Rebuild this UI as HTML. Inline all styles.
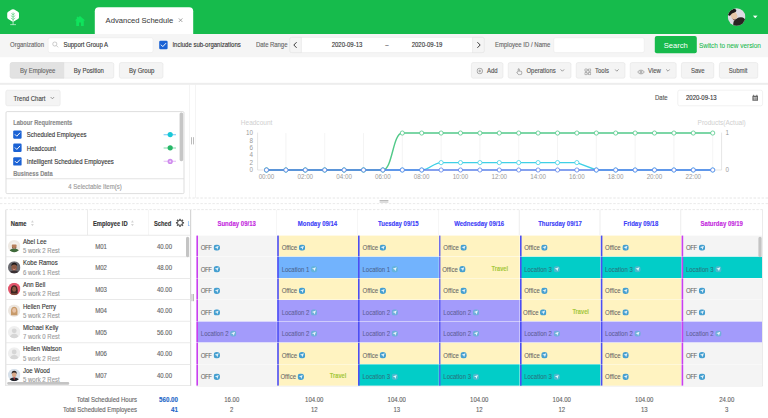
<!DOCTYPE html>
<html lang="en">
<head>
<meta charset="utf-8">
<title>Advanced Schedule</title>
<style>
*{box-sizing:border-box;margin:0;padding:0}
html,body{width:768px;height:418px;overflow:hidden;background:#fff}
body{font-family:"Liberation Sans",sans-serif;color:#333}
#app{position:absolute;left:0;top:0;width:1920px;height:1045px;transform:scale(.4);transform-origin:0 0;background:#fff;font-size:15px;overflow:hidden}
#app div,#app span,#app svg{position:absolute}
.t{white-space:nowrap;line-height:20px;height:20px;margin-top:-9px;transform:scaleY(1.07);-webkit-text-stroke:.28px currentColor}
.cell p,.cell b{-webkit-text-stroke:.15px currentColor}
.cell u,.cell em{display:inline-block;transform:scaleY(1.07);font-style:normal}
.cell b em{transform:scaleY(1.12)}
.b{font-weight:700}
.btn{background:#f4f4f4;border:1px solid #dcdcdc;border-radius:5px}
.inp{background:#fff;border:1px solid #e2e2e2;border-radius:5px}
.cb{width:21px;height:21px;background:#1b62d4;border-radius:3px}
.hdr{background:#16bb4c;left:0;top:0;width:1920px;height:85px}
.tab{background:#fff;left:237px;top:17.5px;width:246px;height:67.5px;border-radius:10px 10px 0 0}
.fbar{background:#f5f5f5;left:0;top:85px;width:1920px;height:58px}
.cell i{position:absolute;left:-0.3px;top:0;width:3.8px;height:100%;display:block}
.cell u{text-decoration:none;letter-spacing:-1px;margin-right:1px}
.cell p{position:absolute;left:10.5px;top:4.5px;height:100%;display:flex;align-items:center;white-space:nowrap}
.cell p.tv{left:7.5px}
#app .cell svg{position:static;margin-left:4px;flex:none}
.cell b{position:absolute;left:131px;top:3px;height:100%;display:flex;align-items:center;font-size:14.3px;color:#a6c83c}
.av{width:31px;height:31px;border-radius:50%;overflow:hidden}
</style>
</head>
<body>
<div id="app">
<div class="hdr"></div>
<svg style="left:17px;top:22px" width="32" height="42" viewBox="0 0 32 42">
<path d="M15.500 1 Q17 1 18.500 2 L28 7.500 Q30.500 9 30.500 12 V21 Q30.500 24 28 25.500 L18.500 31 Q15.500 32.500 12.500 31 L3.500 25.500 Q1 24 1 21 V12 Q1 9 3.500 7.500 L12.500 2 Q14 1 15.500 1Z" fill="#fff"/>
<path d="M15.700 30 V39.500 M8.500 39.800 H23" stroke="#e8f8ee" stroke-width="1.800" fill="none"/>
<path d="M15.700 9 V31 M15.700 15 l-4.500 -3.500 M15.700 15 l4.500 -3.500 M15.700 21 l-5.500 -4 M15.700 21 l5.500 -4 M15.700 27 l-5.500 -4 M15.700 27 l5.500 -4" stroke="#3cc96a" stroke-width="1.500" fill="none"/>
</svg>
<svg style="left:186px;top:39px" width="28" height="27" viewBox="0 0 28 27">
<path d="M14 1 L27 12 H23.5 V26 H16.5 V17.5 H11.5 V26 H4.5 V12 H1 L6 7.7 V3 H9.5 V4.8 Z" fill="#0fe35c"/></svg>
<div class="tab"></div>
<span class="t " style="top:51px;left:264px;transform:scaleY(1.055);font-size:19px;color:#3a3a3a;-webkit-text-stroke:.1px">Advanced Schedule</span>
<svg style="left:445px;top:44px" width="13" height="13" viewBox="0 0 13 13"><path d="M2 2l9 9M11 2l-9 9" stroke="#777" stroke-width="1.6" fill="none"/></svg>
<svg style="left:1819px;top:20px" width="45" height="45" viewBox="0 0 45 45">
<defs><clipPath id="avc"><circle cx="22.5" cy="22.5" r="22"/></clipPath></defs>
<g clip-path="url(#avc)"><rect width="45" height="45" fill="#dedbe4"/>
<path d="M14 45 Q13 30 22 27 Q30 22 38 24 Q45 27 45 36 V45 Z" fill="#2a2322"/>
<ellipse cx="16" cy="19" rx="8" ry="9.500" fill="#e6c6a8" transform="rotate(-25 16 19)"/>
<path d="M1 17 Q3 6 12 3 Q20 0 22 6 Q22 10 17 11 Q10 12 7 18 Q4 21 1 17Z" fill="#1c1818"/>
<path d="M9 24 Q14 30 20 27 L16 31 Z" fill="#8a5a48"/>
</g></svg>
<svg style="left:1881px;top:38px" width="14" height="8" viewBox="0 0 14 8"><path d="M1 0.5h12l-6 7z" fill="#fff"/></svg>
<div class="fbar"></div>
<span class="t " style="top:111.3px;left:25px;color:#666;">Organization</span>
<div class="inp" style="left:120px;top:94px;width:263px;height:38px;"></div>
<svg style="left:130px;top:103px" width="17" height="17" viewBox="0 0 17 17"><circle cx="7" cy="7" r="5.2" fill="none" stroke="#aaa" stroke-width="1.5"/><path d="M11 11l4.5 4.5" stroke="#aaa" stroke-width="1.6"/></svg>
<span class="t " style="top:111.3px;left:158.5px;color:#333">Support Group A</span>
<div class="cb" style="left:398px;top:102px;width:21px;height:21px;"><svg width="21" height="21" viewBox="0 0 21 21"><path d="M5 10.5l4 4 7.5-8" fill="none" stroke="#fff" stroke-width="2.4" stroke-linecap="round" stroke-linejoin="round"/></svg></div>
<span class="t " style="top:111.3px;left:431px;color:#333">Include sub-organizations</span>
<span class="t " style="top:111.3px;left:640px;color:#666;letter-spacing:-.15px">Date Range</span>
<div class="inp" style="left:724px;top:93px;width:487px;height:39px;"></div>
<div class="btn" style="left:724px;top:93px;width:30px;height:39px;border-radius:5px 0 0 5px;background:#f5f5f5"></div>
<div class="btn" style="left:1181px;top:93px;width:30px;height:39px;border-radius:0 5px 5px 0;background:#f5f5f5"></div>
<svg style="left:732px;top:104px" width="12" height="17" viewBox="0 0 12 17"><path d="M9.5 1.5l-7 7 7 7" fill="none" stroke="#333" stroke-width="2.4"/></svg>
<svg style="left:1191px;top:104px" width="12" height="17" viewBox="0 0 12 17"><path d="M2.5 1.5l7 7-7 7" fill="none" stroke="#333" stroke-width="2.4"/></svg>
<span class="t " style="top:111.3px;left:667.5px;width:400px;text-align:center;color:#333">2020-09-13</span>
<span class="t " style="top:111.3px;left:767.5px;width:400px;text-align:center;color:#333">–</span>
<span class="t " style="top:111.3px;left:867.5px;width:400px;text-align:center;color:#333">2020-09-19</span>
<span class="t " style="top:111.3px;left:1237.5px;color:#666;">Employee ID / Name</span>
<div class="inp" style="left:1384px;top:94px;width:227px;height:38px;"></div>
<div class="" style="left:1637px;top:90px;width:105px;height:43px;background:#17ba4c;border-radius:5px"></div>
<span class="t " style="top:112px;left:1489.5px;width:400px;text-align:center;transform:scaleY(1.055);color:#fff;font-size:19px;-webkit-text-stroke:0">Search</span>
<span class="t " style="top:112.5px;left:1747.5px;transform:scaleY(1.003);color:#17ba4c;font-size:16px;-webkit-text-stroke:.15px">Switch to new version</span>
<div class="btn" style="left:25px;top:156px;width:260px;height:39.5px;"></div>
<div class="" style="left:25px;top:156px;width:135px;height:39.5px;background:#e2e2e2;border-radius:5px 0 0 5px;border:1px solid #d8d8d8"></div>
<span class="t " style="top:176.7px;left:50px;color:#666">By Employee</span>
<span class="t " style="top:176.7px;left:184.5px;color:#444">By Position</span>
<div class="btn" style="left:298px;top:156px;width:110px;height:39.5px;"></div>
<span class="t " style="top:176.7px;left:322.5px;color:#444">By Group</span>
<div class="btn" style="left:1177.5px;top:156px;width:80.0px;height:39.5px;"></div>
<span class="t " style="top:176.7px;left:1217.5px;color:#555">Add</span>
<svg style="left:1191px;top:169px" width="17" height="17" viewBox="0 0 17 17"><circle cx="8.5" cy="8.5" r="7" fill="none" stroke="#666" stroke-width="1.3"/><path d="M8.5 5v7M5 8.5h7" stroke="#666" stroke-width="1.3"/></svg>
<div class="btn" style="left:1270px;top:156px;width:157.5px;height:39.5px;"></div>
<span class="t " style="top:176.7px;left:1316px;color:#555">Operations</span>
<svg style="left:1290px;top:170px" width="17" height="18" viewBox="0 0 17 18"><path d="M5.5 9V3.2a1.4 1.4 0 0 1 2.8 0V8h3.6a2.6 2.6 0 0 1 2.6 2.6V13a4 4 0 0 1-4 4H8.3a4 4 0 0 1-3.3-1.8L2.3 11.4a1.3 1.3 0 0 1 2-1.6z" fill="none" stroke="#666" stroke-width="1.3"/></svg>
<span style="left:1400px;top:172px;width:12px;height:8px"><svg width="12" height="8" viewBox="0 0 12 8"><path d="M1.5 1.5l4.5 4.5 4.5-4.5" fill="none" stroke="#777" stroke-width="1.8"/></svg></span>
<div class="btn" style="left:1440px;top:156px;width:122.5px;height:39.5px;"></div>
<span class="t " style="top:176.7px;left:1487.5px;color:#555">Tools</span>
<svg style="left:1461px;top:171px" width="17" height="17" viewBox="0 0 17 17"><g fill="none" stroke="#666" stroke-width="1.3"><rect x="1" y="1" width="6" height="6" rx="1"/><rect x="10" y="1" width="6" height="6" rx="1"/><rect x="1" y="10" width="6" height="6" rx="1"/><rect x="10" y="10" width="6" height="6" rx="1"/></g></svg>
<span style="left:1536px;top:172px;width:12px;height:8px"><svg width="12" height="8" viewBox="0 0 12 8"><path d="M1.5 1.5l4.5 4.5 4.5-4.5" fill="none" stroke="#777" stroke-width="1.8"/></svg></span>
<div class="btn" style="left:1575px;top:156px;width:116px;height:39.5px;"></div>
<span class="t " style="top:176.7px;left:1620px;color:#555">View</span>
<svg style="left:1593px;top:173px" width="19" height="14" viewBox="0 0 19 14"><path d="M1 7Q9.500 -3 18 7Q9.500 17 1 7Z" fill="none" stroke="#666" stroke-width="1.3"/><circle cx="9.5" cy="7" r="2.6" fill="none" stroke="#666" stroke-width="1.3"/></svg>
<span style="left:1664px;top:172px;width:12px;height:8px"><svg width="12" height="8" viewBox="0 0 12 8"><path d="M1.5 1.5l4.5 4.5 4.5-4.5" fill="none" stroke="#777" stroke-width="1.8"/></svg></span>
<div class="btn" style="left:1702.5px;top:156px;width:82.5px;height:39.5px;"></div>
<span class="t " style="top:176.7px;left:1727.5px;color:#555">Save</span>
<div class="btn" style="left:1797.5px;top:156px;width:97.5px;height:39.5px;"></div>
<span class="t " style="top:176.7px;left:1822px;color:#555">Submit</span>
<div class="" style="left:0px;top:207px;width:1920px;height:5px;background:#ededed"></div>
<div class="" style="left:473px;top:212px;width:1px;height:283px;background:#e4e4e4"></div>
<div class="" style="left:488px;top:212px;width:1px;height:283px;background:#e4e4e4"></div>
<div class="" style="left:478px;top:343px;width:2px;height:18px;background:#aaa"></div>
<div class="" style="left:482.5px;top:343px;width:2px;height:18px;background:#aaa"></div>
<div class="btn" style="left:14px;top:225px;width:136.5px;height:39.5px;"></div>
<span class="t " style="top:247px;left:34px;color:#444">Trend Chart</span>
<span style="left:125px;top:241px;width:12px;height:8px"><svg width="12" height="8" viewBox="0 0 12 8"><path d="M1.5 1.5l4.5 4.5 4.5-4.5" fill="none" stroke="#777" stroke-width="1.8"/></svg></span>
<div class="" style="left:14px;top:277.5px;width:447px;height:207px;border:2px solid #d4d4d4;border-radius:4px;background:#fff"></div>
<div class="" style="left:15px;top:446px;width:445px;height:2px;background:#dcdcdc"></div>
<span class="t b" style="top:305px;left:33px;transform:scaleY(1.122);color:#8a8a8a;font-size:14.3px">Labour Requirements</span>
<div class="cb" style="left:33px;top:326.0px;width:21px;height:21px;"><svg width="21" height="21" viewBox="0 0 21 21"><path d="M5 10.5l4 4 7.5-8" fill="none" stroke="#fff" stroke-width="2.4" stroke-linecap="round" stroke-linejoin="round"/></svg></div>
<span class="t " style="top:336.5px;left:67px;color:#333">Scheduled Employees</span>
<div class="" style="left:409px;top:335.5px;width:31px;height:2.4px;background:#4ab6f2"></div>
<div class="" style="left:418.5px;top:330.0px;width:13px;height:13px;background:#19c8d6;border-radius:50%"></div>
<div class="cb" style="left:33px;top:359.0px;width:21px;height:21px;"><svg width="21" height="21" viewBox="0 0 21 21"><path d="M5 10.5l4 4 7.5-8" fill="none" stroke="#fff" stroke-width="2.4" stroke-linecap="round" stroke-linejoin="round"/></svg></div>
<span class="t " style="top:369.5px;left:67px;color:#333">Headcount</span>
<div class="" style="left:409px;top:368.5px;width:31px;height:2.4px;background:#5fcf92"></div>
<div class="" style="left:418.5px;top:363.0px;width:13px;height:13px;background:#27b768;border-radius:50%"></div>
<div class="cb" style="left:33px;top:392.5px;width:21px;height:21px;"><svg width="21" height="21" viewBox="0 0 21 21"><path d="M5 10.5l4 4 7.5-8" fill="none" stroke="#fff" stroke-width="2.4" stroke-linecap="round" stroke-linejoin="round"/></svg></div>
<span class="t " style="top:403px;left:67px;color:#333">Intelligent Scheduled Employees</span>
<div class="" style="left:409px;top:402px;width:31px;height:2.4px;background:#dca6f2"></div>
<div class="" style="left:418.5px;top:396.5px;width:13px;height:13px;background:#cf8bee;border-radius:50%"></div>
<div class="" style="left:422.5px;top:400.5px;width:5px;height:5px;background:#f1dcfa;border-radius:50%"></div>
<span class="t b" style="top:433.5px;left:33px;transform:scaleY(1.122);color:#8a8a8a;font-size:14.3px">Business Data</span>
<div class="" style="left:449px;top:281px;width:8.5px;height:122px;background:#c6c6c6;border-radius:4px"></div>
<span class="t " style="top:467px;left:37.5px;width:400px;text-align:center;color:#999">4 Selectable Item(s)</span>
<svg style="left:0;top:212px" width="1920" height="283" viewBox="0 212 1920 283" font-family="Liberation Sans, sans-serif"><line x1="714.8" y1="332.6" x2="714.8" y2="425.0" stroke="#ececec" stroke-width="1.5"/><line x1="811.8" y1="332.6" x2="811.8" y2="425.0" stroke="#ececec" stroke-width="1.5"/><line x1="908.8" y1="332.6" x2="908.8" y2="425.0" stroke="#ececec" stroke-width="1.5"/><line x1="1005.8" y1="332.6" x2="1005.8" y2="425.0" stroke="#ececec" stroke-width="1.5"/><line x1="1102.8" y1="332.6" x2="1102.8" y2="425.0" stroke="#ececec" stroke-width="1.5"/><line x1="1199.8" y1="332.6" x2="1199.8" y2="425.0" stroke="#ececec" stroke-width="1.5"/><line x1="1296.8" y1="332.6" x2="1296.8" y2="425.0" stroke="#ececec" stroke-width="1.5"/><line x1="1393.8" y1="332.6" x2="1393.8" y2="425.0" stroke="#ececec" stroke-width="1.5"/><line x1="1490.8" y1="332.6" x2="1490.8" y2="425.0" stroke="#ececec" stroke-width="1.5"/><line x1="1587.8" y1="332.6" x2="1587.8" y2="425.0" stroke="#ececec" stroke-width="1.5"/><line x1="1684.8" y1="332.6" x2="1684.8" y2="425.0" stroke="#ececec" stroke-width="1.5"/><line x1="1781.8" y1="332.6" x2="1781.8" y2="425.0" stroke="#ececec" stroke-width="1.5"/><path d="M644 331.6 V425.0 H666.2" stroke="#d4d4d4" stroke-width="1.5" fill="none"/><path d="M1804 331.6 V425.0 H1781.8" stroke="#d4d4d4" stroke-width="1.5" fill="none"/><text x="602" y="311.5" font-size="16.3" fill="#cfcfcf">Headcount</text><text x="1744" y="311.5" font-size="16.3" fill="#cfcfcf">Products(Actual)</text><text x="632.5" y="430.5" font-size="15.7" fill="#9a9a9a" text-anchor="end">0</text><text x="632.5" y="412.0" font-size="15.7" fill="#9a9a9a" text-anchor="end">2</text><text x="632.5" y="393.5" font-size="15.7" fill="#9a9a9a" text-anchor="end">4</text><text x="632.5" y="375.1" font-size="15.7" fill="#9a9a9a" text-anchor="end">6</text><text x="632.5" y="356.6" font-size="15.7" fill="#9a9a9a" text-anchor="end">8</text><text x="632.5" y="338.1" font-size="15.7" fill="#9a9a9a" text-anchor="end">10</text><text x="1814" y="338.1" font-size="15.7" fill="#9a9a9a">1</text><text x="1814" y="430.5" font-size="15.7" fill="#9a9a9a">0</text><text x="666.2" y="448.7" font-size="15.7" fill="#9a9a9a" text-anchor="middle">00:00</text><text x="763.2" y="448.7" font-size="15.7" fill="#9a9a9a" text-anchor="middle">02:00</text><text x="860.2" y="448.7" font-size="15.7" fill="#9a9a9a" text-anchor="middle">04:00</text><text x="957.2" y="448.7" font-size="15.7" fill="#9a9a9a" text-anchor="middle">06:00</text><text x="1054.2" y="448.7" font-size="15.7" fill="#9a9a9a" text-anchor="middle">08:00</text><text x="1151.2" y="448.7" font-size="15.7" fill="#9a9a9a" text-anchor="middle">10:00</text><text x="1248.2" y="448.7" font-size="15.7" fill="#9a9a9a" text-anchor="middle">12:00</text><text x="1345.2" y="448.7" font-size="15.7" fill="#9a9a9a" text-anchor="middle">14:00</text><text x="1442.2" y="448.7" font-size="15.7" fill="#9a9a9a" text-anchor="middle">16:00</text><text x="1539.2" y="448.7" font-size="15.7" fill="#9a9a9a" text-anchor="middle">18:00</text><text x="1636.2" y="448.7" font-size="15.7" fill="#9a9a9a" text-anchor="middle">20:00</text><text x="1733.2" y="448.7" font-size="15.7" fill="#9a9a9a" text-anchor="middle">22:00</text><path d="M666.2 425.0 H1054.2 C1073.7 425.0 1083.3 406.5 1102.8 406.5 H1442.2 L1490.8 425.0 H1781.8" stroke="#3fd0e6" stroke-width="3.4" fill="none"/><circle cx="666.2" cy="425.0" r="5.2" fill="#fff" stroke="#3fd0e6" stroke-width="2"/><circle cx="714.8" cy="425.0" r="5.2" fill="#fff" stroke="#3fd0e6" stroke-width="2"/><circle cx="763.2" cy="425.0" r="5.2" fill="#fff" stroke="#3fd0e6" stroke-width="2"/><circle cx="811.8" cy="425.0" r="5.2" fill="#fff" stroke="#3fd0e6" stroke-width="2"/><circle cx="860.2" cy="425.0" r="5.2" fill="#fff" stroke="#3fd0e6" stroke-width="2"/><circle cx="908.8" cy="425.0" r="5.2" fill="#fff" stroke="#3fd0e6" stroke-width="2"/><circle cx="957.2" cy="425.0" r="5.2" fill="#fff" stroke="#3fd0e6" stroke-width="2"/><circle cx="1005.8" cy="425.0" r="5.2" fill="#fff" stroke="#3fd0e6" stroke-width="2"/><circle cx="1054.2" cy="425.0" r="5.2" fill="#fff" stroke="#3fd0e6" stroke-width="2"/><circle cx="1102.8" cy="406.5" r="5.2" fill="#fff" stroke="#3fd0e6" stroke-width="2"/><circle cx="1151.2" cy="406.5" r="5.2" fill="#fff" stroke="#3fd0e6" stroke-width="2"/><circle cx="1199.8" cy="406.5" r="5.2" fill="#fff" stroke="#3fd0e6" stroke-width="2"/><circle cx="1248.2" cy="406.5" r="5.2" fill="#fff" stroke="#3fd0e6" stroke-width="2"/><circle cx="1296.8" cy="406.5" r="5.2" fill="#fff" stroke="#3fd0e6" stroke-width="2"/><circle cx="1345.2" cy="406.5" r="5.2" fill="#fff" stroke="#3fd0e6" stroke-width="2"/><circle cx="1393.8" cy="406.5" r="5.2" fill="#fff" stroke="#3fd0e6" stroke-width="2"/><circle cx="1442.2" cy="406.5" r="5.2" fill="#fff" stroke="#3fd0e6" stroke-width="2"/><circle cx="1490.8" cy="425.0" r="5.2" fill="#fff" stroke="#3fd0e6" stroke-width="2"/><circle cx="1539.2" cy="425.0" r="5.2" fill="#fff" stroke="#3fd0e6" stroke-width="2"/><circle cx="1587.8" cy="425.0" r="5.2" fill="#fff" stroke="#3fd0e6" stroke-width="2"/><circle cx="1636.2" cy="425.0" r="5.2" fill="#fff" stroke="#3fd0e6" stroke-width="2"/><circle cx="1684.8" cy="425.0" r="5.2" fill="#fff" stroke="#3fd0e6" stroke-width="2"/><circle cx="1733.2" cy="425.0" r="5.2" fill="#fff" stroke="#3fd0e6" stroke-width="2"/><circle cx="1781.8" cy="425.0" r="5.2" fill="#fff" stroke="#3fd0e6" stroke-width="2"/><path d="M666.2 425.0 H957.2 C981.5 425.0 981.5 332.6 1005.8 332.6 H1781.8" stroke="#52c989" stroke-width="3.6" fill="none"/><circle cx="666.2" cy="425.0" r="5.2" fill="#fff" stroke="#52c989" stroke-width="2"/><circle cx="714.8" cy="425.0" r="5.2" fill="#fff" stroke="#52c989" stroke-width="2"/><circle cx="763.2" cy="425.0" r="5.2" fill="#fff" stroke="#52c989" stroke-width="2"/><circle cx="811.8" cy="425.0" r="5.2" fill="#fff" stroke="#52c989" stroke-width="2"/><circle cx="860.2" cy="425.0" r="5.2" fill="#fff" stroke="#52c989" stroke-width="2"/><circle cx="908.8" cy="425.0" r="5.2" fill="#fff" stroke="#52c989" stroke-width="2"/><circle cx="957.2" cy="425.0" r="5.2" fill="#fff" stroke="#52c989" stroke-width="2"/><circle cx="1005.8" cy="332.6" r="5.2" fill="#fff" stroke="#52c989" stroke-width="2"/><circle cx="1054.2" cy="332.6" r="5.2" fill="#fff" stroke="#52c989" stroke-width="2"/><circle cx="1102.8" cy="332.6" r="5.2" fill="#fff" stroke="#52c989" stroke-width="2"/><circle cx="1151.2" cy="332.6" r="5.2" fill="#fff" stroke="#52c989" stroke-width="2"/><circle cx="1199.8" cy="332.6" r="5.2" fill="#fff" stroke="#52c989" stroke-width="2"/><circle cx="1248.2" cy="332.6" r="5.2" fill="#fff" stroke="#52c989" stroke-width="2"/><circle cx="1296.8" cy="332.6" r="5.2" fill="#fff" stroke="#52c989" stroke-width="2"/><circle cx="1345.2" cy="332.6" r="5.2" fill="#fff" stroke="#52c989" stroke-width="2"/><circle cx="1393.8" cy="332.6" r="5.2" fill="#fff" stroke="#52c989" stroke-width="2"/><circle cx="1442.2" cy="332.6" r="5.2" fill="#fff" stroke="#52c989" stroke-width="2"/><circle cx="1490.8" cy="332.6" r="5.2" fill="#fff" stroke="#52c989" stroke-width="2"/><circle cx="1539.2" cy="332.6" r="5.2" fill="#fff" stroke="#52c989" stroke-width="2"/><circle cx="1587.8" cy="332.6" r="5.2" fill="#fff" stroke="#52c989" stroke-width="2"/><circle cx="1636.2" cy="332.6" r="5.2" fill="#fff" stroke="#52c989" stroke-width="2"/><circle cx="1684.8" cy="332.6" r="5.2" fill="#fff" stroke="#52c989" stroke-width="2"/><circle cx="1733.2" cy="332.6" r="5.2" fill="#fff" stroke="#52c989" stroke-width="2"/><circle cx="1781.8" cy="332.6" r="5.2" fill="#fff" stroke="#52c989" stroke-width="2"/><path d="M666.2 425.0 H1781.8" stroke="#5c82ea" stroke-width="3.8" fill="none"/><circle cx="666.2" cy="425.0" r="5.2" fill="#fff" stroke="#5c82ea" stroke-width="2"/><circle cx="714.8" cy="425.0" r="5.2" fill="#fff" stroke="#5c82ea" stroke-width="2"/><circle cx="763.2" cy="425.0" r="5.2" fill="#fff" stroke="#5c82ea" stroke-width="2"/><circle cx="811.8" cy="425.0" r="5.2" fill="#fff" stroke="#5c82ea" stroke-width="2"/><circle cx="860.2" cy="425.0" r="5.2" fill="#fff" stroke="#5c82ea" stroke-width="2"/><circle cx="908.8" cy="425.0" r="5.2" fill="#fff" stroke="#5c82ea" stroke-width="2"/><circle cx="957.2" cy="425.0" r="5.2" fill="#fff" stroke="#5c82ea" stroke-width="2"/><circle cx="1005.8" cy="425.0" r="5.2" fill="#fff" stroke="#5c82ea" stroke-width="2"/><circle cx="1054.2" cy="425.0" r="5.2" fill="#fff" stroke="#5c82ea" stroke-width="2"/><circle cx="1102.8" cy="425.0" r="5.2" fill="#fff" stroke="#5c82ea" stroke-width="2"/><circle cx="1151.2" cy="425.0" r="5.2" fill="#fff" stroke="#5c82ea" stroke-width="2"/><circle cx="1199.8" cy="425.0" r="5.2" fill="#fff" stroke="#5c82ea" stroke-width="2"/><circle cx="1248.2" cy="425.0" r="5.2" fill="#fff" stroke="#5c82ea" stroke-width="2"/><circle cx="1296.8" cy="425.0" r="5.2" fill="#fff" stroke="#5c82ea" stroke-width="2"/><circle cx="1345.2" cy="425.0" r="5.2" fill="#fff" stroke="#5c82ea" stroke-width="2"/><circle cx="1393.8" cy="425.0" r="5.2" fill="#fff" stroke="#5c82ea" stroke-width="2"/><circle cx="1442.2" cy="425.0" r="5.2" fill="#fff" stroke="#5c82ea" stroke-width="2"/><circle cx="1490.8" cy="425.0" r="5.2" fill="#fff" stroke="#5c82ea" stroke-width="2"/><circle cx="1539.2" cy="425.0" r="5.2" fill="#fff" stroke="#5c82ea" stroke-width="2"/><circle cx="1587.8" cy="425.0" r="5.2" fill="#fff" stroke="#5c82ea" stroke-width="2"/><circle cx="1636.2" cy="425.0" r="5.2" fill="#fff" stroke="#5c82ea" stroke-width="2"/><circle cx="1684.8" cy="425.0" r="5.2" fill="#fff" stroke="#5c82ea" stroke-width="2"/><circle cx="1733.2" cy="425.0" r="5.2" fill="#fff" stroke="#5c82ea" stroke-width="2"/><circle cx="1781.8" cy="425.0" r="5.2" fill="#fff" stroke="#5c82ea" stroke-width="2"/></svg>
<span class="t " style="top:243.5px;left:1637.5px;color:#555">Date</span>
<div class="inp" style="left:1694px;top:225px;width:212.5px;height:39.5px;border-color:#ddd"></div>
<span class="t " style="top:243.5px;left:1715px;color:#333">2020-09-13</span>
<svg style="left:1880px;top:236px" width="16" height="17" viewBox="0 0 16 17"><path d="M1 3.5h14v12.500H1z" fill="#666"/><path d="M4 0.500v4M12 0.500v4" stroke="#666" stroke-width="2.2"/><path d="M3 8h10M3 11.500h10M6 6.500v7M10 6.500v7" stroke="#fff" stroke-width="1"/></svg>
<div class="" style="left:0px;top:494px;width:1920px;height:0px;border-top:2px dashed #e0e0e0;height:0"></div>
<div class="" style="left:0px;top:507.5px;width:1920px;height:0px;border-top:2px dashed #e4e4e4;height:0"></div>
<div class="" style="left:949px;top:499.5px;width:22px;height:2px;background:#aaa"></div>
<div class="" style="left:949px;top:503.5px;width:22px;height:2px;background:#aaa"></div>
<div class="" style="left:14px;top:522.5px;width:1893px;height:0px;border-top:2px dashed #e2e2e2;height:0"></div>
<div class="" style="left:13px;top:524.5px;width:2.5px;height:440.5px;background:#e0e0e0"></div>
<div class="" style="left:475px;top:524.5px;width:2.5px;height:440.5px;background:#d6d6d6"></div>
<div class="" style="left:218px;top:524.5px;width:1.5px;height:63.60000000000002px;background:#e8e8e8"></div>
<div class="" style="left:370.5px;top:524.5px;width:1.5px;height:63.60000000000002px;background:#e8e8e8"></div>
<div class="" style="left:14px;top:587.1px;width:462px;height:2px;background:#e4e4e4"></div>
<div class="" style="left:14px;top:640.85px;width:462px;height:2px;background:#e4e4e4"></div>
<div class="" style="left:14px;top:694.6px;width:462px;height:2px;background:#e4e4e4"></div>
<div class="" style="left:14px;top:748.35px;width:462px;height:2px;background:#e4e4e4"></div>
<div class="" style="left:14px;top:802.1px;width:462px;height:2px;background:#e4e4e4"></div>
<div class="" style="left:14px;top:855.85px;width:462px;height:2px;background:#e4e4e4"></div>
<div class="" style="left:14px;top:909.6px;width:462px;height:2px;background:#e4e4e4"></div>
<div class="" style="left:14px;top:963.35px;width:462px;height:2px;background:#e4e4e4"></div>
<span class="t b" style="top:558.6px;left:27px;transform:scaleY(1.115);color:#333;font-size:14.4px">Name</span>
<span class="t b" style="top:558.6px;left:232.5px;transform:scaleY(1.115);color:#333;font-size:14.4px">Employee ID</span>
<span class="t b" style="top:558.6px;left:385px;transform:scaleY(1.115);color:#333;font-size:14.4px">Sched</span>
<span style="left:76px;top:549px;width:10px;height:18px"><svg width="10" height="18" viewBox="0 0 10 18"><path d="M5 1.5l3.500 5.500H1.500z" fill="#d4d4d4"/><path d="M5 16.500l3.500-5.500H1.500z" fill="#d4d4d4"/></svg></span>
<span style="left:326px;top:549px;width:10px;height:18px"><svg width="10" height="18" viewBox="0 0 10 18"><path d="M5 1.5l3.500 5.500H1.500z" fill="#d4d4d4"/><path d="M5 16.500l3.500-5.500H1.500z" fill="#d4d4d4"/></svg></span>
<svg style="left:439px;top:546px" width="22" height="22" viewBox="-11 -11 22 22"><rect x="-2" y="-10.300" width="4" height="4.500" fill="#555" transform="rotate(0)"/><rect x="-2" y="-10.300" width="4" height="4.500" fill="#555" transform="rotate(45)"/><rect x="-2" y="-10.300" width="4" height="4.500" fill="#555" transform="rotate(90)"/><rect x="-2" y="-10.300" width="4" height="4.500" fill="#555" transform="rotate(135)"/><rect x="-2" y="-10.300" width="4" height="4.500" fill="#555" transform="rotate(180)"/><rect x="-2" y="-10.300" width="4" height="4.500" fill="#555" transform="rotate(225)"/><rect x="-2" y="-10.300" width="4" height="4.500" fill="#555" transform="rotate(270)"/><rect x="-2" y="-10.300" width="4" height="4.500" fill="#555" transform="rotate(315)"/><circle r="6.2" fill="none" stroke="#555" stroke-width="2.2"/></svg>
<span class="t " style="top:558px;left:469px;color:#5a9ae6;width:5px;overflow:hidden;-webkit-text-stroke:0">L</span>
<svg style="left:20px;top:599.5px" width="31" height="31" viewBox="0 0 31 31"><defs><clipPath id="c599"><circle cx="15.5" cy="15.5" r="15.5"/></clipPath></defs><g clip-path="url(#c599)"><rect width="31" height="31" fill="#efeae4"/><path d="M2 31Q4 21 15.500 21Q27 21 29 31Z" fill="#3f6a3a"/><ellipse cx="15.5" cy="14.500" rx="6" ry="6.500" fill="#b8805c"/><path d="M5 10.500Q15.500 1 26 10.500L22 11.500H9Z" fill="#f6f2ec"/><path d="M10 17Q15.500 25 21 17L20 21H11Z" fill="#5a3422"/></g></svg>
<span class="t " style="top:603.3px;left:57.5px;color:#333">Abel Lee</span>
<span class="t " style="top:626.6px;left:57.5px;color:#9a9a9a">5 work 2 Rest</span>
<span class="t " style="top:615.0px;left:238px;color:#666">M01</span>
<span class="t " style="top:615.0px;left:392.5px;color:#666">40.00</span>
<svg style="left:20px;top:653.2px" width="31" height="31" viewBox="0 0 31 31"><defs><clipPath id="c653"><circle cx="15.5" cy="15.5" r="15.5"/></clipPath></defs><g clip-path="url(#c653)"><rect width="31" height="31" fill="#6a6a70"/><path d="M3 31Q5 23 15.500 23Q26 23 28 31Z" fill="#3a3034"/><ellipse cx="15.5" cy="15.500" rx="7" ry="8" fill="#8c5a44"/><path d="M8 12Q9 4 15.500 4Q22 4 23 12Q19 8.500 15.500 8.500Q12 8.500 8 12Z" fill="#201818"/><path d="M12 19.500Q15.500 22.500 19 19.500" stroke="#f0a0a0" stroke-width="1.800" fill="none"/></g></svg>
<span class="t " style="top:657.1px;left:57.5px;color:#333">Kobe Ramos</span>
<span class="t " style="top:680.4px;left:57.5px;color:#9a9a9a">6 work 1 Rest</span>
<span class="t " style="top:668.7px;left:238px;color:#666">M02</span>
<span class="t " style="top:668.7px;left:392.5px;color:#666">48.00</span>
<svg style="left:20px;top:707.0px" width="31" height="31" viewBox="0 0 31 31"><defs><clipPath id="c707"><circle cx="15.5" cy="15.5" r="15.5"/></clipPath></defs><g clip-path="url(#c707)"><rect width="31" height="31" fill="#e2566c"/><path d="M3 31Q5 24 15.500 24Q26 24 28 31Z" fill="#7a4a3a"/><path d="M7 26Q5 6 15.500 6Q26 6 24 26Z" fill="#3a2420"/><ellipse cx="15.5" cy="16" rx="5" ry="6.500" fill="#8a5a42"/></g></svg>
<span class="t " style="top:710.8px;left:57.5px;color:#333">Ann Bell</span>
<span class="t " style="top:734.1px;left:57.5px;color:#9a9a9a">5 work 2 Rest</span>
<span class="t " style="top:722.5px;left:238px;color:#666">M03</span>
<span class="t " style="top:722.5px;left:392.5px;color:#666">40.00</span>
<svg style="left:20px;top:760.7px" width="31" height="31" viewBox="0 0 31 31"><defs><clipPath id="c760"><circle cx="15.5" cy="15.5" r="15.5"/></clipPath></defs><g clip-path="url(#c760)"><rect width="31" height="31" fill="#ece6e0"/><path d="M3 31Q5 24 15.500 24Q26 24 28 31Z" fill="#e8e2dc"/><path d="M7.500 27Q5 6 15.500 6Q26 6 23.500 27Z" fill="#c79a6a"/><ellipse cx="15.5" cy="15" rx="4.800" ry="6" fill="#e8c2a6"/></g></svg>
<span class="t " style="top:764.6px;left:57.5px;color:#333">Hellen Perry</span>
<span class="t " style="top:787.9px;left:57.5px;color:#9a9a9a">5 work 2 Rest</span>
<span class="t " style="top:776.2px;left:238px;color:#666">M04</span>
<span class="t " style="top:776.2px;left:392.5px;color:#666">40.00</span>
<svg style="left:20px;top:814.5px" width="31" height="31" viewBox="0 0 31 31"><defs><clipPath id="c814"><circle cx="15.5" cy="15.5" r="15.5"/></clipPath></defs><g clip-path="url(#c814)"><rect width="31" height="31" fill="#efefef"/><circle cx="15.5" cy="12" r="6" fill="#d6d6d6"/><path d="M4.500 31Q5 19.500 15.500 19.500Q26 19.500 26.500 31Z" fill="#d6d6d6"/></g></svg>
<span class="t " style="top:818.3px;left:57.5px;color:#333">Michael Kelly</span>
<span class="t " style="top:841.6px;left:57.5px;color:#9a9a9a">7 work 0 Rest</span>
<span class="t " style="top:830.0px;left:238px;color:#666">M05</span>
<span class="t " style="top:830.0px;left:392.5px;color:#666">56.00</span>
<svg style="left:20px;top:868.2px" width="31" height="31" viewBox="0 0 31 31"><defs><clipPath id="c868"><circle cx="15.5" cy="15.5" r="15.5"/></clipPath></defs><g clip-path="url(#c868)"><rect width="31" height="31" fill="#efefef"/><circle cx="15.5" cy="12" r="6" fill="#d6d6d6"/><path d="M4.500 31Q5 19.500 15.500 19.500Q26 19.500 26.500 31Z" fill="#d6d6d6"/></g></svg>
<span class="t " style="top:872.1px;left:57.5px;color:#333">Hellen Watson</span>
<span class="t " style="top:895.4px;left:57.5px;color:#9a9a9a">5 work 2 Rest</span>
<span class="t " style="top:883.7px;left:238px;color:#666">M06</span>
<span class="t " style="top:883.7px;left:392.5px;color:#666">40.00</span>
<svg style="left:20px;top:922.0px" width="31" height="31" viewBox="0 0 31 31"><defs><clipPath id="c922"><circle cx="15.5" cy="15.5" r="15.5"/></clipPath></defs><g clip-path="url(#c922)"><rect width="31" height="31" fill="#d6e0ea"/><path d="M2 31Q4 22 15.500 22Q27 22 29 31Z" fill="#20242c"/><path d="M13.500 22L15.500 29L17.500 22Z" fill="#d83a3a"/><ellipse cx="15.5" cy="14" rx="5.600" ry="6.600" fill="#d8a888"/><path d="M9 13Q9 5 15.500 5Q22 5 22 13Q19 9 15.500 9.500Q12 9 9 13Z" fill="#2a2220"/></g></svg>
<span class="t " style="top:925.8px;left:57.5px;color:#333">Joe Wood</span>
<span class="t " style="top:949.1px;left:57.5px;color:#9a9a9a">5 work 2 Rest</span>
<span class="t " style="top:937.5px;left:238px;color:#666">M07</span>
<span class="t " style="top:937.5px;left:392.5px;color:#666">40.00</span>
<div class="" style="left:465px;top:592px;width:7.5px;height:51px;background:#c4c4c4;border-radius:4px"></div>
<div class="" style="left:17.5px;top:955px;width:155px;height:6.5px;background:#c4c4c4;border-radius:3px"></div>
<div class="" style="left:478.5px;top:735px;width:2px;height:18px;background:#aaa"></div>
<div class="" style="left:483px;top:735px;width:2px;height:18px;background:#aaa"></div>
<div class="" style="left:1905px;top:524.5px;width:2px;height:440.5px;background:#e6e6e6"></div>
<div class="" style="left:490.5px;top:964px;width:1416.0px;height:2px;background:#e4e4e4"></div>
<span class="t b" style="top:557.6px;left:391.6px;width:400px;text-align:center;transform:scaleY(1.070);color:#c428e0;font-size:15px">Sunday 09/13</span>
<span class="t b" style="top:557.6px;left:593.7px;width:400px;text-align:center;transform:scaleY(1.070);color:#3c40f8;font-size:15px">Monday 09/14</span>
<div class="" style="left:690.6px;top:524.5px;width:1.5px;height:63.60000000000002px;background:#e8e8e8"></div>
<span class="t b" style="top:557.6px;left:795.8px;width:400px;text-align:center;transform:scaleY(1.070);color:#3c40f8;font-size:15px">Tuesday 09/15</span>
<div class="" style="left:892.8px;top:524.5px;width:1.5px;height:63.60000000000002px;background:#e8e8e8"></div>
<span class="t b" style="top:557.6px;left:997.9000000000001px;width:400px;text-align:center;transform:scaleY(1.070);color:#3c40f8;font-size:15px">Wednesday 09/16</span>
<div class="" style="left:1094.9px;top:524.5px;width:1.5px;height:63.60000000000002px;background:#e8e8e8"></div>
<span class="t b" style="top:557.6px;left:1200.1px;width:400px;text-align:center;transform:scaleY(1.070);color:#3c40f8;font-size:15px">Thursday 09/17</span>
<div class="" style="left:1297.0px;top:524.5px;width:1.5px;height:63.60000000000002px;background:#e8e8e8"></div>
<span class="t b" style="top:557.6px;left:1402.2px;width:400px;text-align:center;transform:scaleY(1.070);color:#3c40f8;font-size:15px">Friday 09/18</span>
<div class="" style="left:1499.1px;top:524.5px;width:1.5px;height:63.60000000000002px;background:#e8e8e8"></div>
<span class="t b" style="top:557.6px;left:1604.3px;width:400px;text-align:center;transform:scaleY(1.070);color:#c428e0;font-size:15px">Saturday 09/19</span>
<div class="" style="left:1701.2px;top:524.5px;width:1.5px;height:63.60000000000002px;background:#e8e8e8"></div>
<div class="cell" style="left:491.5px;top:588.6px;width:200.925px;height:52.75px;background:#f4f4f4"><i style="background:#c93ff0"></i><p style="color:#666"><u>OFF</u><svg width="16" height="16" viewBox="0 0 16 16"><circle cx="8" cy="8" r="8" fill="#459fd0"/><path d="M2.800 7L12.800 3.300L9.300 13.300L7.500 8.700Z" fill="#fff" fill-opacity=".85"/></svg></p></div>
<div class="cell" style="left:693.62px;top:588.6px;width:200.925px;height:52.75px;background:#fff3c1"><i style="background:#4c4ef4"></i><p style="color:#666"><em>Office</em><svg width="16" height="16" viewBox="0 0 16 16"><circle cx="8" cy="8" r="8" fill="#459fd0"/><path d="M2.800 7L12.800 3.300L9.300 13.300L7.500 8.700Z" fill="#fff" fill-opacity=".85"/></svg></p></div>
<div class="cell" style="left:895.75px;top:588.6px;width:200.925px;height:52.75px;background:#fff3c1"><i style="background:#4c4ef4"></i><p style="color:#666"><em>Office</em><svg width="16" height="16" viewBox="0 0 16 16"><circle cx="8" cy="8" r="8" fill="#459fd0"/><path d="M2.800 7L12.800 3.300L9.300 13.300L7.500 8.700Z" fill="#fff" fill-opacity=".85"/></svg></p></div>
<div class="cell" style="left:1097.88px;top:588.6px;width:200.925px;height:52.75px;background:#fff3c1"><i style="background:#4c4ef4"></i><p style="color:#666"><em>Office</em><svg width="16" height="16" viewBox="0 0 16 16"><circle cx="8" cy="8" r="8" fill="#459fd0"/><path d="M2.800 7L12.800 3.300L9.300 13.300L7.500 8.700Z" fill="#fff" fill-opacity=".85"/></svg></p></div>
<div class="cell" style="left:1300.0px;top:588.6px;width:200.925px;height:52.75px;background:#fff3c1"><i style="background:#4c4ef4"></i><p style="color:#666"><em>Office</em><svg width="16" height="16" viewBox="0 0 16 16"><circle cx="8" cy="8" r="8" fill="#459fd0"/><path d="M2.800 7L12.800 3.300L9.300 13.300L7.500 8.700Z" fill="#fff" fill-opacity=".85"/></svg></p></div>
<div class="cell" style="left:1502.12px;top:588.6px;width:200.925px;height:52.75px;background:#fff3c1"><i style="background:#4c4ef4"></i><p style="color:#666"><em>Office</em><svg width="16" height="16" viewBox="0 0 16 16"><circle cx="8" cy="8" r="8" fill="#459fd0"/><path d="M2.800 7L12.800 3.300L9.300 13.300L7.500 8.700Z" fill="#fff" fill-opacity=".85"/></svg></p></div>
<div class="cell" style="left:1704.25px;top:588.6px;width:200.925px;height:52.75px;background:#f4f4f4"><i style="background:#c93ff0"></i><p style="color:#666"><u>OFF</u><svg width="16" height="16" viewBox="0 0 16 16"><circle cx="8" cy="8" r="8" fill="#459fd0"/><path d="M2.800 7L12.800 3.300L9.300 13.300L7.500 8.700Z" fill="#fff" fill-opacity=".85"/></svg></p></div>
<div class="cell" style="left:491.5px;top:642.35px;width:200.925px;height:52.75px;background:#f4f4f4"><i style="background:#c93ff0"></i><p style="color:#666"><u>OFF</u><svg width="16" height="16" viewBox="0 0 16 16"><circle cx="8" cy="8" r="8" fill="#459fd0"/><path d="M2.800 7L12.800 3.300L9.300 13.300L7.500 8.700Z" fill="#fff" fill-opacity=".85"/></svg></p></div>
<div class="cell" style="left:693.62px;top:642.35px;width:200.925px;height:52.75px;background:#72b3fd"><i style="background:#4c4ef4"></i><p style="color:#4a6490"><em>Location 1</em><svg width="16" height="16" viewBox="0 0 16 16"><circle cx="8" cy="8" r="8" fill="#5fb4d0" fill-opacity=".75"/><path d="M2.800 7L12.800 3.300L9.300 13.300L7.500 8.700Z" fill="#fff" fill-opacity=".85"/></svg></p></div>
<div class="cell" style="left:895.75px;top:642.35px;width:200.925px;height:52.75px;background:#72b3fd"><i style="background:#4c4ef4"></i><p style="color:#4a6490"><em>Location 1</em><svg width="16" height="16" viewBox="0 0 16 16"><circle cx="8" cy="8" r="8" fill="#5fb4d0" fill-opacity=".75"/><path d="M2.800 7L12.800 3.300L9.300 13.300L7.500 8.700Z" fill="#fff" fill-opacity=".85"/></svg></p></div>
<div class="cell" style="left:1097.88px;top:642.35px;width:200.925px;height:52.75px;background:#fff3c1"><i style="background:#4c4ef4"></i><p class="tv" style="color:#666"><em>Office</em><svg width="16" height="16" viewBox="0 0 16 16"><circle cx="8" cy="8" r="8" fill="#459fd0"/><path d="M2.800 7L12.800 3.300L9.300 13.300L7.500 8.700Z" fill="#fff" fill-opacity=".85"/></svg></p><b><em>Travel</em></b></div>
<div class="cell" style="left:1300.0px;top:642.35px;width:200.925px;height:52.75px;background:#02cdc8"><i style="background:#4c4ef4"></i><p style="color:#2a7480"><em>Location 3</em><svg width="16" height="16" viewBox="0 0 16 16"><circle cx="8" cy="8" r="8" fill="#5fb4d0" fill-opacity=".75"/><path d="M2.800 7L12.800 3.300L9.300 13.300L7.500 8.700Z" fill="#fff" fill-opacity=".85"/></svg></p></div>
<div class="cell" style="left:1502.12px;top:642.35px;width:200.925px;height:52.75px;background:#02cdc8"><i style="background:#4c4ef4"></i><p style="color:#2a7480"><em>Location 3</em><svg width="16" height="16" viewBox="0 0 16 16"><circle cx="8" cy="8" r="8" fill="#5fb4d0" fill-opacity=".75"/><path d="M2.800 7L12.800 3.300L9.300 13.300L7.500 8.700Z" fill="#fff" fill-opacity=".85"/></svg></p></div>
<div class="cell" style="left:1704.25px;top:642.35px;width:200.925px;height:52.75px;background:#02cdc8"><i style="background:#c93ff0"></i><p style="color:#2a7480"><em>Location 3</em><svg width="16" height="16" viewBox="0 0 16 16"><circle cx="8" cy="8" r="8" fill="#5fb4d0" fill-opacity=".75"/><path d="M2.800 7L12.800 3.300L9.300 13.300L7.500 8.700Z" fill="#fff" fill-opacity=".85"/></svg></p></div>
<div class="cell" style="left:491.5px;top:696.1px;width:200.925px;height:52.75px;background:#f4f4f4"><i style="background:#c93ff0"></i><p style="color:#666"><u>OFF</u><svg width="16" height="16" viewBox="0 0 16 16"><circle cx="8" cy="8" r="8" fill="#459fd0"/><path d="M2.800 7L12.800 3.300L9.300 13.300L7.500 8.700Z" fill="#fff" fill-opacity=".85"/></svg></p></div>
<div class="cell" style="left:693.62px;top:696.1px;width:200.925px;height:52.75px;background:#fff3c1"><i style="background:#4c4ef4"></i><p style="color:#666"><em>Office</em><svg width="16" height="16" viewBox="0 0 16 16"><circle cx="8" cy="8" r="8" fill="#459fd0"/><path d="M2.800 7L12.800 3.300L9.300 13.300L7.500 8.700Z" fill="#fff" fill-opacity=".85"/></svg></p></div>
<div class="cell" style="left:895.75px;top:696.1px;width:200.925px;height:52.75px;background:#fff3c1"><i style="background:#4c4ef4"></i><p style="color:#666"><em>Office</em><svg width="16" height="16" viewBox="0 0 16 16"><circle cx="8" cy="8" r="8" fill="#459fd0"/><path d="M2.800 7L12.800 3.300L9.300 13.300L7.500 8.700Z" fill="#fff" fill-opacity=".85"/></svg></p></div>
<div class="cell" style="left:1097.88px;top:696.1px;width:200.925px;height:52.75px;background:#fff3c1"><i style="background:#4c4ef4"></i><p style="color:#666"><em>Office</em><svg width="16" height="16" viewBox="0 0 16 16"><circle cx="8" cy="8" r="8" fill="#459fd0"/><path d="M2.800 7L12.800 3.300L9.300 13.300L7.500 8.700Z" fill="#fff" fill-opacity=".85"/></svg></p></div>
<div class="cell" style="left:1300.0px;top:696.1px;width:200.925px;height:52.75px;background:#fff3c1"><i style="background:#4c4ef4"></i><p style="color:#666"><em>Office</em><svg width="16" height="16" viewBox="0 0 16 16"><circle cx="8" cy="8" r="8" fill="#459fd0"/><path d="M2.800 7L12.800 3.300L9.300 13.300L7.500 8.700Z" fill="#fff" fill-opacity=".85"/></svg></p></div>
<div class="cell" style="left:1502.12px;top:696.1px;width:200.925px;height:52.75px;background:#fff3c1"><i style="background:#4c4ef4"></i><p style="color:#666"><em>Office</em><svg width="16" height="16" viewBox="0 0 16 16"><circle cx="8" cy="8" r="8" fill="#459fd0"/><path d="M2.800 7L12.800 3.300L9.300 13.300L7.500 8.700Z" fill="#fff" fill-opacity=".85"/></svg></p></div>
<div class="cell" style="left:1704.25px;top:696.1px;width:200.925px;height:52.75px;background:#f4f4f4"><i style="background:#c93ff0"></i><p style="color:#666"><u>OFF</u><svg width="16" height="16" viewBox="0 0 16 16"><circle cx="8" cy="8" r="8" fill="#459fd0"/><path d="M2.800 7L12.800 3.300L9.300 13.300L7.500 8.700Z" fill="#fff" fill-opacity=".85"/></svg></p></div>
<div class="cell" style="left:491.5px;top:749.85px;width:200.925px;height:52.75px;background:#f4f4f4"><i style="background:#c93ff0"></i><p style="color:#666"><u>OFF</u><svg width="16" height="16" viewBox="0 0 16 16"><circle cx="8" cy="8" r="8" fill="#459fd0"/><path d="M2.800 7L12.800 3.300L9.300 13.300L7.500 8.700Z" fill="#fff" fill-opacity=".85"/></svg></p></div>
<div class="cell" style="left:693.62px;top:749.85px;width:200.925px;height:52.75px;background:#a39bfb"><i style="background:#4c4ef4"></i><p style="color:#5e5e98"><em>Location 2</em><svg width="16" height="16" viewBox="0 0 16 16"><circle cx="8" cy="8" r="8" fill="#5fb4d0" fill-opacity=".75"/><path d="M2.800 7L12.800 3.300L9.300 13.300L7.500 8.700Z" fill="#fff" fill-opacity=".85"/></svg></p></div>
<div class="cell" style="left:895.75px;top:749.85px;width:200.925px;height:52.75px;background:#a39bfb"><i style="background:#4c4ef4"></i><p style="color:#5e5e98"><em>Location 2</em><svg width="16" height="16" viewBox="0 0 16 16"><circle cx="8" cy="8" r="8" fill="#5fb4d0" fill-opacity=".75"/><path d="M2.800 7L12.800 3.300L9.300 13.300L7.500 8.700Z" fill="#fff" fill-opacity=".85"/></svg></p></div>
<div class="cell" style="left:1097.88px;top:749.85px;width:200.925px;height:52.75px;background:#a39bfb"><i style="background:#4c4ef4"></i><p style="color:#5e5e98"><em>Location 2</em><svg width="16" height="16" viewBox="0 0 16 16"><circle cx="8" cy="8" r="8" fill="#5fb4d0" fill-opacity=".75"/><path d="M2.800 7L12.800 3.300L9.300 13.300L7.500 8.700Z" fill="#fff" fill-opacity=".85"/></svg></p></div>
<div class="cell" style="left:1300.0px;top:749.85px;width:200.925px;height:52.75px;background:#fff3c1"><i style="background:#4c4ef4"></i><p class="tv" style="color:#666"><em>Office</em><svg width="16" height="16" viewBox="0 0 16 16"><circle cx="8" cy="8" r="8" fill="#459fd0"/><path d="M2.800 7L12.800 3.300L9.300 13.300L7.500 8.700Z" fill="#fff" fill-opacity=".85"/></svg></p><b><em>Travel</em></b></div>
<div class="cell" style="left:1502.12px;top:749.85px;width:200.925px;height:52.75px;background:#fff3c1"><i style="background:#4c4ef4"></i><p style="color:#666"><em>Office</em><svg width="16" height="16" viewBox="0 0 16 16"><circle cx="8" cy="8" r="8" fill="#459fd0"/><path d="M2.800 7L12.800 3.300L9.300 13.300L7.500 8.700Z" fill="#fff" fill-opacity=".85"/></svg></p></div>
<div class="cell" style="left:1704.25px;top:749.85px;width:200.925px;height:52.75px;background:#f4f4f4"><i style="background:#c93ff0"></i><p style="color:#666"><u>OFF</u><svg width="16" height="16" viewBox="0 0 16 16"><circle cx="8" cy="8" r="8" fill="#459fd0"/><path d="M2.800 7L12.800 3.300L9.300 13.300L7.500 8.700Z" fill="#fff" fill-opacity=".85"/></svg></p></div>
<div class="cell" style="left:491.5px;top:803.6px;width:200.925px;height:52.75px;background:#a39bfb"><i style="background:#c93ff0"></i><p style="color:#5e5e98"><em>Location 2</em><svg width="16" height="16" viewBox="0 0 16 16"><circle cx="8" cy="8" r="8" fill="#5fb4d0" fill-opacity=".75"/><path d="M2.800 7L12.800 3.300L9.300 13.300L7.500 8.700Z" fill="#fff" fill-opacity=".85"/></svg></p></div>
<div class="cell" style="left:693.62px;top:803.6px;width:200.925px;height:52.75px;background:#a39bfb"><i style="background:#4c4ef4"></i><p style="color:#5e5e98"><em>Location 2</em><svg width="16" height="16" viewBox="0 0 16 16"><circle cx="8" cy="8" r="8" fill="#5fb4d0" fill-opacity=".75"/><path d="M2.800 7L12.800 3.300L9.300 13.300L7.500 8.700Z" fill="#fff" fill-opacity=".85"/></svg></p></div>
<div class="cell" style="left:895.75px;top:803.6px;width:200.925px;height:52.75px;background:#a39bfb"><i style="background:#4c4ef4"></i><p style="color:#5e5e98"><em>Location 2</em><svg width="16" height="16" viewBox="0 0 16 16"><circle cx="8" cy="8" r="8" fill="#5fb4d0" fill-opacity=".75"/><path d="M2.800 7L12.800 3.300L9.300 13.300L7.500 8.700Z" fill="#fff" fill-opacity=".85"/></svg></p></div>
<div class="cell" style="left:1097.88px;top:803.6px;width:200.925px;height:52.75px;background:#a39bfb"><i style="background:#4c4ef4"></i><p style="color:#5e5e98"><em>Location 2</em><svg width="16" height="16" viewBox="0 0 16 16"><circle cx="8" cy="8" r="8" fill="#5fb4d0" fill-opacity=".75"/><path d="M2.800 7L12.800 3.300L9.300 13.300L7.500 8.700Z" fill="#fff" fill-opacity=".85"/></svg></p></div>
<div class="cell" style="left:1300.0px;top:803.6px;width:200.925px;height:52.75px;background:#a39bfb"><i style="background:#4c4ef4"></i><p style="color:#5e5e98"><em>Location 2</em><svg width="16" height="16" viewBox="0 0 16 16"><circle cx="8" cy="8" r="8" fill="#5fb4d0" fill-opacity=".75"/><path d="M2.800 7L12.800 3.300L9.300 13.300L7.500 8.700Z" fill="#fff" fill-opacity=".85"/></svg></p></div>
<div class="cell" style="left:1502.12px;top:803.6px;width:200.925px;height:52.75px;background:#a39bfb"><i style="background:#4c4ef4"></i><p style="color:#5e5e98"><em>Location 2</em><svg width="16" height="16" viewBox="0 0 16 16"><circle cx="8" cy="8" r="8" fill="#5fb4d0" fill-opacity=".75"/><path d="M2.800 7L12.800 3.300L9.300 13.300L7.500 8.700Z" fill="#fff" fill-opacity=".85"/></svg></p></div>
<div class="cell" style="left:1704.25px;top:803.6px;width:200.925px;height:52.75px;background:#a39bfb"><i style="background:#c93ff0"></i><p style="color:#5e5e98"><em>Location 2</em><svg width="16" height="16" viewBox="0 0 16 16"><circle cx="8" cy="8" r="8" fill="#5fb4d0" fill-opacity=".75"/><path d="M2.800 7L12.800 3.300L9.300 13.300L7.500 8.700Z" fill="#fff" fill-opacity=".85"/></svg></p></div>
<div class="cell" style="left:491.5px;top:857.35px;width:200.925px;height:52.75px;background:#f4f4f4"><i style="background:#c93ff0"></i><p style="color:#666"><u>OFF</u><svg width="16" height="16" viewBox="0 0 16 16"><circle cx="8" cy="8" r="8" fill="#459fd0"/><path d="M2.800 7L12.800 3.300L9.300 13.300L7.500 8.700Z" fill="#fff" fill-opacity=".85"/></svg></p></div>
<div class="cell" style="left:693.62px;top:857.35px;width:200.925px;height:52.75px;background:#fff3c1"><i style="background:#4c4ef4"></i><p style="color:#666"><em>Office</em><svg width="16" height="16" viewBox="0 0 16 16"><circle cx="8" cy="8" r="8" fill="#459fd0"/><path d="M2.800 7L12.800 3.300L9.300 13.300L7.500 8.700Z" fill="#fff" fill-opacity=".85"/></svg></p></div>
<div class="cell" style="left:895.75px;top:857.35px;width:200.925px;height:52.75px;background:#fff3c1"><i style="background:#4c4ef4"></i><p style="color:#666"><em>Office</em><svg width="16" height="16" viewBox="0 0 16 16"><circle cx="8" cy="8" r="8" fill="#459fd0"/><path d="M2.800 7L12.800 3.300L9.300 13.300L7.500 8.700Z" fill="#fff" fill-opacity=".85"/></svg></p></div>
<div class="cell" style="left:1097.88px;top:857.35px;width:200.925px;height:52.75px;background:#fff3c1"><i style="background:#4c4ef4"></i><p style="color:#666"><em>Office</em><svg width="16" height="16" viewBox="0 0 16 16"><circle cx="8" cy="8" r="8" fill="#459fd0"/><path d="M2.800 7L12.800 3.300L9.300 13.300L7.500 8.700Z" fill="#fff" fill-opacity=".85"/></svg></p></div>
<div class="cell" style="left:1300.0px;top:857.35px;width:200.925px;height:52.75px;background:#fff3c1"><i style="background:#4c4ef4"></i><p style="color:#666"><em>Office</em><svg width="16" height="16" viewBox="0 0 16 16"><circle cx="8" cy="8" r="8" fill="#459fd0"/><path d="M2.800 7L12.800 3.300L9.300 13.300L7.500 8.700Z" fill="#fff" fill-opacity=".85"/></svg></p></div>
<div class="cell" style="left:1502.12px;top:857.35px;width:200.925px;height:52.75px;background:#fff3c1"><i style="background:#4c4ef4"></i><p style="color:#666"><em>Office</em><svg width="16" height="16" viewBox="0 0 16 16"><circle cx="8" cy="8" r="8" fill="#459fd0"/><path d="M2.800 7L12.800 3.300L9.300 13.300L7.500 8.700Z" fill="#fff" fill-opacity=".85"/></svg></p></div>
<div class="cell" style="left:1704.25px;top:857.35px;width:200.925px;height:52.75px;background:#f4f4f4"><i style="background:#c93ff0"></i><p style="color:#666"><u>OFF</u><svg width="16" height="16" viewBox="0 0 16 16"><circle cx="8" cy="8" r="8" fill="#459fd0"/><path d="M2.800 7L12.800 3.300L9.300 13.300L7.500 8.700Z" fill="#fff" fill-opacity=".85"/></svg></p></div>
<div class="cell" style="left:491.5px;top:911.1px;width:200.925px;height:52.75px;background:#f4f4f4"><i style="background:#c93ff0"></i><p style="color:#666"><u>OFF</u><svg width="16" height="16" viewBox="0 0 16 16"><circle cx="8" cy="8" r="8" fill="#459fd0"/><path d="M2.800 7L12.800 3.300L9.300 13.300L7.500 8.700Z" fill="#fff" fill-opacity=".85"/></svg></p></div>
<div class="cell" style="left:693.62px;top:911.1px;width:200.925px;height:52.75px;background:#fff3c1"><i style="background:#4c4ef4"></i><p class="tv" style="color:#666"><em>Office</em><svg width="16" height="16" viewBox="0 0 16 16"><circle cx="8" cy="8" r="8" fill="#459fd0"/><path d="M2.800 7L12.800 3.300L9.300 13.300L7.500 8.700Z" fill="#fff" fill-opacity=".85"/></svg></p><b><em>Travel</em></b></div>
<div class="cell" style="left:895.75px;top:911.1px;width:200.925px;height:52.75px;background:#02cdc8"><i style="background:#4c4ef4"></i><p style="color:#2a7480"><em>Location 3</em><svg width="16" height="16" viewBox="0 0 16 16"><circle cx="8" cy="8" r="8" fill="#5fb4d0" fill-opacity=".75"/><path d="M2.800 7L12.800 3.300L9.300 13.300L7.500 8.700Z" fill="#fff" fill-opacity=".85"/></svg></p></div>
<div class="cell" style="left:1097.88px;top:911.1px;width:200.925px;height:52.75px;background:#02cdc8"><i style="background:#4c4ef4"></i><p style="color:#2a7480"><em>Location 3</em><svg width="16" height="16" viewBox="0 0 16 16"><circle cx="8" cy="8" r="8" fill="#5fb4d0" fill-opacity=".75"/><path d="M2.800 7L12.800 3.300L9.300 13.300L7.500 8.700Z" fill="#fff" fill-opacity=".85"/></svg></p></div>
<div class="cell" style="left:1300.0px;top:911.1px;width:200.925px;height:52.75px;background:#02cdc8"><i style="background:#4c4ef4"></i><p style="color:#2a7480"><em>Location 3</em><svg width="16" height="16" viewBox="0 0 16 16"><circle cx="8" cy="8" r="8" fill="#5fb4d0" fill-opacity=".75"/><path d="M2.800 7L12.800 3.300L9.300 13.300L7.500 8.700Z" fill="#fff" fill-opacity=".85"/></svg></p></div>
<div class="cell" style="left:1502.12px;top:911.1px;width:200.925px;height:52.75px;background:#fff3c1"><i style="background:#4c4ef4"></i><p style="color:#666"><em>Office</em><svg width="16" height="16" viewBox="0 0 16 16"><circle cx="8" cy="8" r="8" fill="#459fd0"/><path d="M2.800 7L12.800 3.300L9.300 13.300L7.500 8.700Z" fill="#fff" fill-opacity=".85"/></svg></p></div>
<div class="cell" style="left:1704.25px;top:911.1px;width:200.925px;height:52.75px;background:#f4f4f4"><i style="background:#c93ff0"></i><p style="color:#666"><u>OFF</u><svg width="16" height="16" viewBox="0 0 16 16"><circle cx="8" cy="8" r="8" fill="#459fd0"/><path d="M2.800 7L12.800 3.300L9.300 13.300L7.500 8.700Z" fill="#fff" fill-opacity=".85"/></svg></p></div>
<div class="" style="left:1896px;top:592px;width:7.5px;height:51px;background:#c4c4c4;border-radius:4px"></div>
<span class="t " style="top:999px;right:1577.5px;color:#666">Total Scheduled Hours</span>
<span class="t " style="top:1024px;right:1577.5px;color:#666">Total Scheduled Employees</span>
<span class="t b" style="top:999px;right:1475px;transform:scaleY(1.035);color:#2466c8;font-size:15.5px">560.00</span>
<span class="t b" style="top:1024px;right:1475px;transform:scaleY(1.035);color:#2466c8;font-size:15.5px">41</span>
<span class="t " style="top:999px;left:379.4px;width:400px;text-align:center;color:#666">16.00</span>
<span class="t " style="top:1024px;left:379.4px;width:400px;text-align:center;color:#666">2</span>
<span class="t " style="top:999px;left:585.6px;width:400px;text-align:center;color:#666">104.00</span>
<span class="t " style="top:1024px;left:585.6px;width:400px;text-align:center;color:#666">12</span>
<span class="t " style="top:999px;left:791.9px;width:400px;text-align:center;color:#666">104.00</span>
<span class="t " style="top:1024px;left:791.9px;width:400px;text-align:center;color:#666">13</span>
<span class="t " style="top:999px;left:998.2px;width:400px;text-align:center;color:#666">104.00</span>
<span class="t " style="top:1024px;left:998.2px;width:400px;text-align:center;color:#666">12</span>
<span class="t " style="top:999px;left:1204.4px;width:400px;text-align:center;color:#666">104.00</span>
<span class="t " style="top:1024px;left:1204.4px;width:400px;text-align:center;color:#666">12</span>
<span class="t " style="top:999px;left:1410.7px;width:400px;text-align:center;color:#666">104.00</span>
<span class="t " style="top:1024px;left:1410.7px;width:400px;text-align:center;color:#666">13</span>
<span class="t " style="top:999px;left:1616.9px;width:400px;text-align:center;color:#666">24.00</span>
<span class="t " style="top:1024px;left:1616.9px;width:400px;text-align:center;color:#666">3</span>
</div>
</body>
</html>
